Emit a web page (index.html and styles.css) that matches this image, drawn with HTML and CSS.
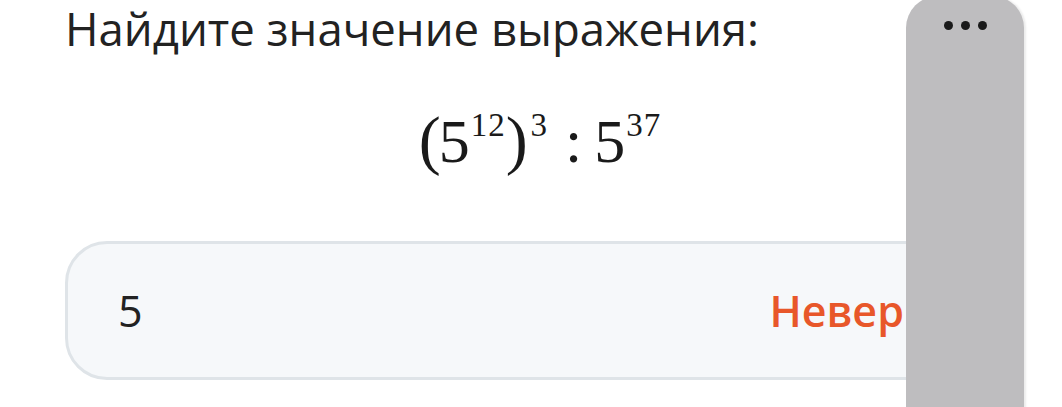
FILE: index.html
```html
<!DOCTYPE html>
<html lang="ru">
<head>
<meta charset="utf-8">
<link rel="stylesheet" href="styles.css">
</head>
<body>
<div class="page">
  <h1 class="title">Найдите значение выражения:</h1>
  <div class="math">
    <span class="paren paren-open">(</span><span class="num">5</span><sup class="sup">12</sup><span class="paren">)</span><sup class="sup sup-outer">3</sup><span class="colon">:</span><span class="num">5</span><sup class="sup">37</sup>
  </div>
  <div class="answer">
    <span class="value">5</span>
    <span class="verdict">Неверно</span>
  </div>
</div>
<div class="overlay">
  <span class="dot"></span><span class="dot"></span><span class="dot"></span>
</div>
</body>
</html>
```
FILE: styles.css
```css
html, body {
  margin: 0;
  padding: 0;
  background: #ffffff;
}
body {
  width: 1062px;
  height: 407px;
  overflow: hidden;
  position: relative;
  font-family: "Open Sans", "Noto Sans", sans-serif;
  color: #222222;
}
.page {
  width: 944px;
  padding-left: 65px;
}
.title {
  margin: 0;
  font-size: 45.5px;
  line-height: 56px;
  font-weight: 400;
  color: #222222;
}
.math {
  margin-top: 44px;
  height: 100px;
  display: flex;
  justify-content: center;
  align-items: baseline;
  font-family: "Liberation Serif", "DejaVu Serif", serif;
  font-size: 62px;
  line-height: 80px;
  color: #1a1a1a;
  padding-left: 6px;
}
.paren {
  font-size: 66px;
}
.paren-open {
  margin-right: -2px;
}
.sup {
  font-size: 33px;
  position: relative;
  top: -26px;
  vertical-align: baseline;
  margin-left: 1px;
  letter-spacing: 1px;
}
.sup-outer {
  margin-left: 3px;
}
.colon {
  margin: 0 12px 0 17px;
}
.answer {
  margin-top: 41px;
  height: 139px;
  box-sizing: border-box;
  border: 3px solid #dfe4e8;
  border-radius: 42px;
  background: #f6f8fa;
  display: flex;
  align-items: center;
  justify-content: space-between;
  padding: 0 48px 0 50px;
}
.value {
  font-size: 43px;
  color: #222222;
}
.verdict {
  font-size: 43px;
  font-weight: 600;
  color: #e8572a;
}
.overlay {
  position: absolute;
  left: 906px;
  top: -4px;
  width: 118px;
  height: 420px;
  background: #bebdbf;
  border-radius: 32px 32px 0 0;
  box-shadow: 2px 0 2px rgba(0,0,0,0.08);
  display: flex;
  justify-content: center;
  gap: 8px;
  padding-top: 25px;
  box-sizing: border-box;
}
.dot {
  width: 9px;
  height: 9px;
  border-radius: 50%;
  background: #1a1a1a;
}
```
